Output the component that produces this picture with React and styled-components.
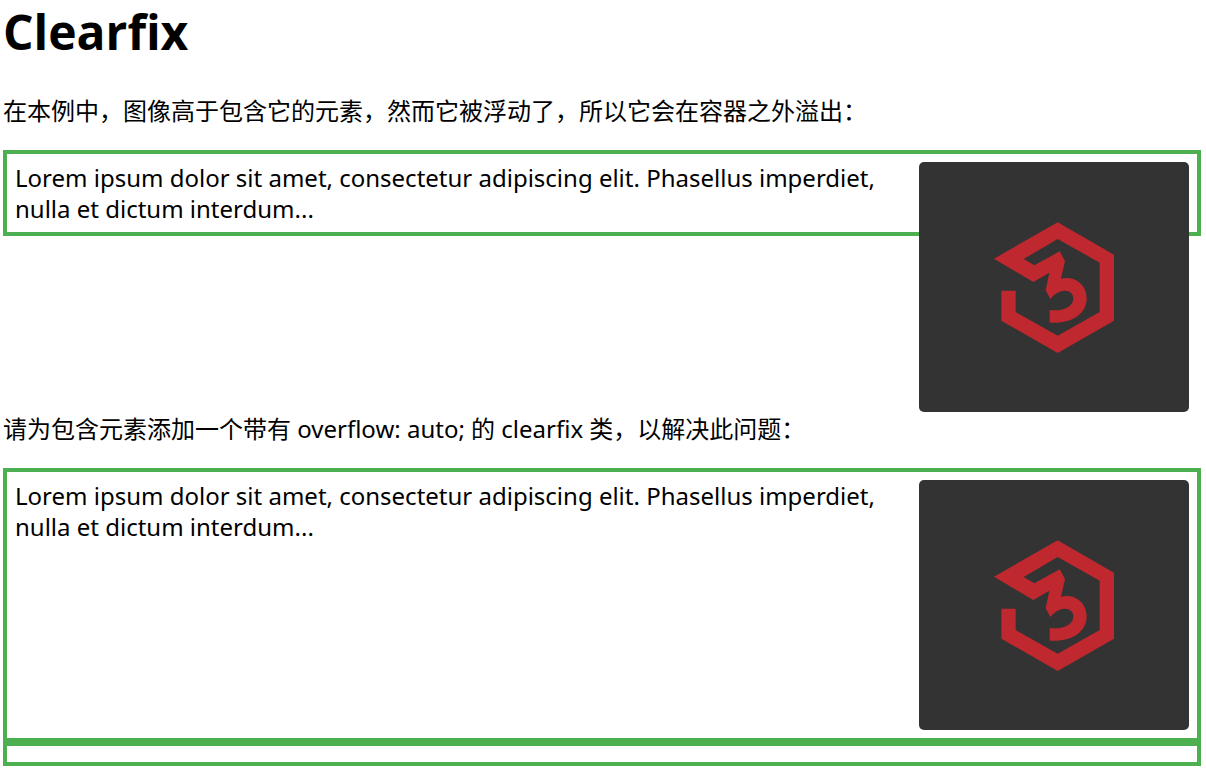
import React from "react";
import styled, { createGlobalStyle } from "styled-components";

const GlobalStyle = createGlobalStyle`
  body {
    margin: 0;
    background: #fff;
    color: #000;
    font-family: "Noto Sans", "Noto Sans CJK SC", sans-serif;
    font-size: 24px;
  }
`;

const Page = styled.main`
  padding: 0 5px 8px 3px;
`;

const Title = styled.h1`
  margin: 0 0 30px;
  font-family: "Open Sans", sans-serif;
  font-size: 48px;
  line-height: 64px;
  font-weight: 700;
`;

const Note = styled.p`
  margin: 0 0 22px;
  clear: right;
  line-height: 34px;
`;

const Box = styled.div`
  border: 4px solid #4caf50;
  padding: 8px;
  line-height: 31px;
  overflow: ${(p) => (p.$clearfix ? "auto" : "visible")};
`;

const Picture = styled.svg`
  float: right;
  display: block;
  width: 270px;
  height: 250px;
  border-radius: 5px;
  background: #333;
`;

function Logo() {
  return (
    <Picture viewBox="0 0 810 750" role="img" aria-label="w3school">
      <path
        transform="translate(198 159)"
        fill="#be282e"
        d="M27 131 L218 22 L387 119 V317 L218 414 L49 317 V227 H92 V291 L218 362 L344 291 V143 L218 72 L116 132 L148 151 L224 109 L240 138 L228 191 C268 181 305 208 305 250 C305 300 256 328 194 323 V285 C236 290 265 273 265 251 C265 222 225 217 196 252 L182 226 L193 173 L145 201 Z"
      />
    </Picture>
  );
}

function Example({ clearfix }) {
  return (
    <Box $clearfix={clearfix}>
      <Logo />
      Lorem ipsum dolor sit amet, consectetur adipiscing elit. Phasellus
      imperdiet, nulla et dictum interdum...
    </Box>
  );
}

export default function App() {
  return (
    <Page lang="zh-CN">
      <GlobalStyle />
      <Title>Clearfix</Title>
      <Note>
        在本例中，图像高于包含它的元素，然而它被浮动了，所以它会在容器之外溢出：
      </Note>
      <Example />
      {/* The floated logo hangs below the first box; the next note clears it. */}
      <Note>
        请为包含元素添加一个带有 overflow: auto; 的 clearfix 类，以解决此问题：
      </Note>
      <Example clearfix />
      <Box />
    </Page>
  );
}
